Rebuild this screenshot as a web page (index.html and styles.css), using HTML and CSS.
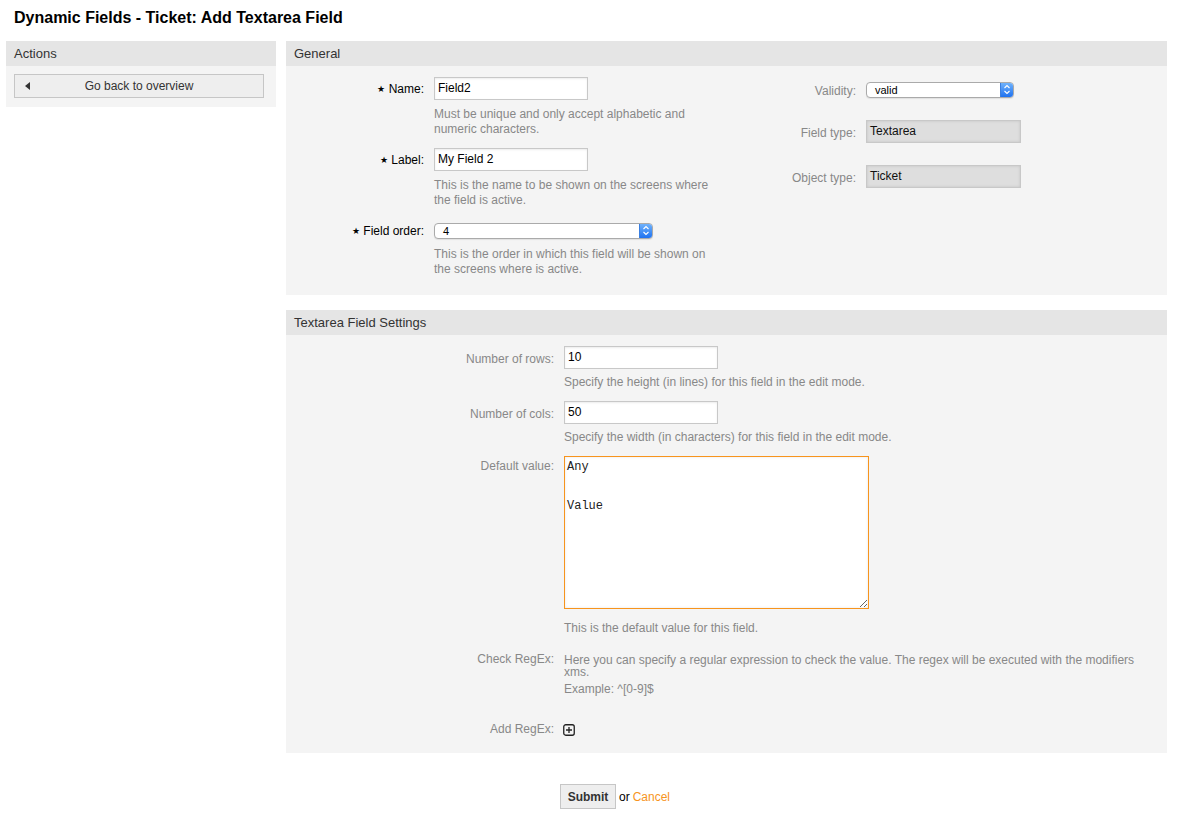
FILE: index.html
```html
<!DOCTYPE html>
<html>
<head>
<meta charset="utf-8">
<link rel="stylesheet" href="styles.css">
</head>
<body>
<h1 class="title">Dynamic Fields - Ticket: Add Textarea Field</h1>
<div class="layout">
  <aside class="sidebar">
    <div class="widget-head">Actions</div>
    <div class="sidebar-body">
      <button class="back-btn"><span class="tri"></span><span class="back-text">Go back to overview</span></button>
    </div>
  </aside>
  <main class="main">
    <section class="widget">
      <div class="widget-head">General</div>
      <div class="general-body">
        <div class="gen-left">
          <div class="row">
            <label class="lbl req"><span class="star">&#9733;</span> Name:</label>
            <div class="field">
              <div class="input">Field2</div>
              <p class="help">Must be unique and only accept alphabetic and numeric characters.</p>
            </div>
          </div>
          <div class="row">
            <label class="lbl req"><span class="star">&#9733;</span> Label:</label>
            <div class="field">
              <div class="input">My Field 2</div>
              <p class="help">This is the name to be shown on the screens where the field is active.</p>
            </div>
          </div>
          <div class="row last">
            <label class="lbl req"><span class="star">&#9733;</span> Field order:</label>
            <div class="field">
              <div class="selwrap"><div class="select wide"><span class="seltext">4</span><span class="selarrow"><svg width="8" height="11" viewBox="0 0 8 11"><path d="M1.5 4 L4 1.5 L6.5 4 M1.5 7 L4 9.5 L6.5 7" fill="none" stroke="#fff" stroke-width="1.1"/></svg></span></div></div>
              <p class="help sel-help">This is the order in which this field will be shown on the screens where is active.</p>
            </div>
          </div>
        </div>
        <div class="gen-right">
          <div class="rrow r1">
            <label class="lbl2">Validity:</label>
            <div class="selwrap"><div class="select narrow"><span class="seltext">valid</span><span class="selarrow"><svg width="8" height="11" viewBox="0 0 8 11"><path d="M1.5 4 L4 1.5 L6.5 4 M1.5 7 L4 9.5 L6.5 7" fill="none" stroke="#fff" stroke-width="1.1"/></svg></span></div></div>
          </div>
          <div class="rrow r2">
            <label class="lbl2">Field type:</label>
            <div class="readonly">Textarea</div>
          </div>
          <div class="rrow">
            <label class="lbl2">Object type:</label>
            <div class="readonly">Ticket</div>
          </div>
        </div>
      </div>
    </section>

    <section class="widget second">
      <div class="widget-head">Textarea Field Settings</div>
      <div class="settings-body">
        <div class="srow">
          <label class="slbl">Number of rows:</label>
          <div class="sfield">
            <div class="input">10</div>
            <p class="help">Specify the height (in lines) for this field in the edit mode.</p>
          </div>
        </div>
        <div class="srow">
          <label class="slbl">Number of cols:</label>
          <div class="sfield">
            <div class="input">50</div>
            <p class="help">Specify the width (in characters) for this field in the edit mode.</p>
          </div>
        </div>
        <div class="srow tarow">
          <label class="slbl ta">Default value:</label>
          <div class="sfield">
            <textarea class="textarea">Any


Value</textarea>
            <p class="help ta-help">This is the default value for this field.</p>
          </div>
        </div>
        <div class="srow regex">
          <label class="slbl plain">Check RegEx:</label>
          <div class="sfield">
            <p class="regex-text">Here you can specify a regular expression to check the value. The regex will be executed with the modifiers xms.</p>
            <p class="regex-text example">Example: ^[0-9]$</p>
          </div>
        </div>
        <div class="srow addrow">
          <label class="slbl plain">Add RegEx:</label>
          <div class="sfield">
            <svg class="plus" width="12" height="12" viewBox="0 0 12 12"><rect x="0.75" y="0.75" width="10.5" height="10.5" rx="2" fill="none" stroke="#222" stroke-width="1.3"/><path d="M6 3 V9 M3 6 H9" stroke="#222" stroke-width="1.3"/></svg>
          </div>
        </div>
      </div>
    </section>

    <div class="actions">
      <button class="submit">Submit</button>
      <span class="or">or</span>
      <a class="cancel" href="#">Cancel</a>
    </div>
  </main>
</div>
</body>
</html>
```

FILE: styles.css
```css
* { box-sizing: border-box; }
html, body { margin: 0; padding: 0; background: #fff; }
body {
  font-family: "Liberation Sans", Arial, Helvetica, sans-serif;
  font-size: 12px;
  color: #333;
  width: 1183px;
}
.title {
  margin: 0;
  padding: 9px 14px 0 14px;
  height: 41px;
  font-size: 16px;
  line-height: 18px;
  font-weight: bold;
  color: #000;
}
.layout {
  display: flex;
  padding-left: 6px;
  gap: 10px;
}
.sidebar { width: 270px; flex: none; }
.main { width: 881px; flex: none; }
.widget-head {
  height: 25px;
  background: #e5e5e5;
  padding: 1px 8px 0 8px;
  font-size: 13px;
  line-height: 24px;
  color: #333;
}
.sidebar-body {
  background: #f4f4f4;
  padding: 8px 12px 9px 8px;
}
.back-btn {
  display: flex;
  align-items: center;
  width: 100%;
  height: 24px;
  background: #eee;
  border: 1px solid #c6c6c6;
  padding: 0 0 0 10px;
  font-family: inherit;
  font-size: 12px;
  color: #333;
  cursor: pointer;
}
.tri {
  width: 0; height: 0;
  border-top: 4px solid transparent;
  border-bottom: 4px solid transparent;
  border-right: 5px solid #333;
  flex: none;
}
.back-text { flex: 1; text-align: center; padding-right: 15px; }

.general-body {
  background: #f4f4f4;
  display: flex;
  padding: 11px 0 18px 0;
}
.gen-left { width: 450px; flex: none; }
.gen-right { flex: 1; padding-top: 1px; }
.row { display: flex; gap: 10px; margin-bottom: 11px; }
.row.last { margin-bottom: 0; }
.lbl {
  width: 138px;
  flex: none;
  text-align: right;
  line-height: 15px;
  padding-top: 5px;
  color: #000;
}
.star { font-size: 9px; position: relative; top: -1px; }
.field { flex: 1; }
.input {
  width: 154px;
  height: 23px;
  background: #fff;
  border: 1px solid #c8c8c8;
  box-shadow: inset 0 1px 2px rgba(0,0,0,0.08);
  padding: 0 3px;
  line-height: 21px;
  font-size: 12px;
  color: #000;
}
.help {
  margin: 7px 0 0 0;
  max-width: 285px;
  line-height: 15px;
  color: #888;
}
.help.sel-help { margin-top: 5px; }
.selwrap { height: 23px; display: flex; align-items: center; }
.select {
  display: flex;
  height: 16px;
  background: #fff;
  border: 1px solid #aaa;
  border-radius: 4px;
  overflow: hidden;
  box-shadow: 0 1px 1px rgba(0,0,0,0.08);
}
.select.wide { width: 219px; }
.select.narrow { width: 148px; }
.seltext {
  flex: 1;
  padding-left: 8px;
  line-height: 14px;
  font-size: 11px;
  color: #000;
}
.selarrow {
  width: 13px;
  flex: none;
  display: flex;
  align-items: center;
  justify-content: center;
  background: linear-gradient(#6fb2fc, #1f72f0);
  border-left: 1px solid #3a7fe0;
}
.rrow { display: flex; gap: 10px; align-items: flex-start; }
.rrow.r1 { margin-bottom: 19px; }
.rrow.r2 { margin-bottom: 22px; }
.lbl2 {
  width: 120px;
  flex: none;
  text-align: right;
  line-height: 15px;
  padding-top: 6px;
  color: #888;
}
.readonly {
  width: 155px;
  height: 23px;
  background: #dedede;
  border: 1px solid #c8c8c8;
  box-shadow: inset 0 0 3px rgba(0,0,0,0.12);
  padding: 0 3px;
  line-height: 20px;
  color: #111;
}

.widget.second { margin-top: 15px; }
.settings-body {
  background: #f4f4f4;
  padding: 11px 0 16px 0;
}
.srow { display: flex; gap: 10px; margin-bottom: 11px; }
.srow.tarow { margin-top: 2px; }
.slbl {
  width: 268px;
  flex: none;
  text-align: right;
  line-height: 15px;
  padding-top: 6px;
  color: #888;
}
.slbl.ta { padding-top: 3px; }
.slbl.plain { padding-top: 0; }
.sfield { width: 586px; }
.sfield .help { max-width: none; margin-top: 6px; }
.textarea {
  display: block;
  width: 305px;
  height: 153px;
  margin: 0;
  border: 1px solid #f7941d;
  outline: none;
  background: #fff;
  box-shadow: inset 0 0 3px rgba(0,0,0,0.1);
  padding: 4px 2px;
  font-family: "Liberation Mono", "Courier New", monospace;
  font-size: 12px;
  line-height: 13px;
  color: #222;
  resize: both;
}
.sfield .help.ta-help { margin-top: 12px; }
.srow.regex { margin-top: 16px; margin-bottom: 0; }
.regex-text {
  margin: 0;
  line-height: 12px;
  padding-top: 2px;
  color: #888;
}
.regex-text.example { margin-top: 3px; }
.srow.addrow { margin-top: 27px; margin-bottom: 0; }
.plus { display: block; margin-top: 2px; margin-left: -1px; }

.actions {
  display: flex;
  align-items: center;
  gap: 3px;
  padding: 31px 0 0 274px;
}
.submit {
  width: 56px;
  height: 25px;
  background: #eee;
  border: 1px solid #c6c6c6;
  font-family: inherit;
  font-size: 12px;
  font-weight: bold;
  color: #333;
  padding: 0;
}
.or { color: #000; }
.cancel { color: #f7941d; text-decoration: none; }
```
